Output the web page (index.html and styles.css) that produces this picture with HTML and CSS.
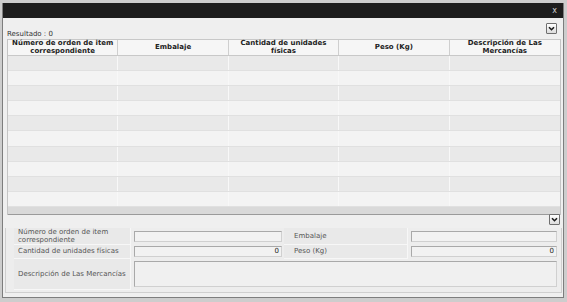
FILE: index.html
```html
<!DOCTYPE html>
<html lang="es">
<head>
<meta charset="utf-8">
<title>Mercancías</title>
<link rel="stylesheet" href="styles.css">
</head>
<body>
<div class="page">
  <div class="dialog">
    <div class="titlebar"><span class="close">x</span></div>
    <div class="content">
      <div class="toolbar">
        <span class="result">Resultado : 0</span>
        <button class="dd" type="button"><svg width="9" height="9" viewBox="0 0 9 9"><path d="M2 3.2 L4.5 5.7 L7 3.2" fill="none" stroke="#1a1a1a" stroke-width="1.6"/></svg></button>
      </div>
      <div class="grid">
        <div class="ghead">
          <div class="hc">Número de orden de item correspondiente</div>
          <div class="hc">Embalaje</div>
          <div class="hc">Cantidad de unidades físicas</div>
          <div class="hc">Peso (Kg)</div>
          <div class="hc">Descripción de Las Mercancías</div>
        </div>
        <div class="grows">
          <div class="gr odd"><div></div><div></div><div></div><div></div><div></div></div>
          <div class="gr"><div></div><div></div><div></div><div></div><div></div></div>
          <div class="gr odd"><div></div><div></div><div></div><div></div><div></div></div>
          <div class="gr"><div></div><div></div><div></div><div></div><div></div></div>
          <div class="gr odd"><div></div><div></div><div></div><div></div><div></div></div>
          <div class="gr"><div></div><div></div><div></div><div></div><div></div></div>
          <div class="gr odd"><div></div><div></div><div></div><div></div><div></div></div>
          <div class="gr"><div></div><div></div><div></div><div></div><div></div></div>
          <div class="gr odd"><div></div><div></div><div></div><div></div><div></div></div>
          <div class="gr"><div></div><div></div><div></div><div></div><div></div></div>
        </div>
        <div class="gfoot"></div>
      </div>
      <div class="splitter">
        <div class="sline"></div>
        <button class="dd" type="button"><svg width="9" height="9" viewBox="0 0 9 9"><path d="M2 3.2 L4.5 5.7 L7 3.2" fill="none" stroke="#1a1a1a" stroke-width="1.6"/></svg></button>
      </div>
      <div class="panel">
        <div class="form">
          <div class="lbl">Número de orden de item correspondiente</div>
          <div class="fld"><div class="inp"></div></div>
          <div class="lbl">Embalaje</div>
          <div class="fld"><div class="inp"></div></div>
          <div class="lbl">Cantidad de unidades físicas</div>
          <div class="fld"><div class="inp num">0</div></div>
          <div class="lbl">Peso (Kg)</div>
          <div class="fld"><div class="inp num">0</div></div>
          <div class="lbl tall">Descripción de Las Mercancías</div>
          <div class="fld wide"><div class="txt"></div></div>
        </div>
      </div>
    </div>
  </div>
</div>
</body>
</html>
```
FILE: styles.css
```css
* { box-sizing: border-box; }
html, body { margin: 0; padding: 0; }
body {
  width: 567px;
  height: 302px;
  overflow: hidden;
  background: #cdcdcd;
  font-family: "DejaVu Sans", Verdana, sans-serif;
  font-size: 7px;
  color: #333;
}
.page {
  padding: 3px 0 0 2px;
}
.dialog {
  width: 562px;
  height: 295px;
  border: 1px solid #7d7d7d;
  border-top: none;
  background: #efefef;
  display: flex;
  flex-direction: column;
}
.titlebar {
  height: 15px;
  background: #1d1d1d;
  display: flex;
  justify-content: flex-end;
  align-items: center;
  padding-right: 6px;
}
.close {
  color: #d0d0d0;
  font-size: 8px;
  line-height: 8px;
}
.content {
  flex: 1;
  padding: 0 2px 0 4px;
  display: flex;
  flex-direction: column;
}
.toolbar {
  height: 21px;
  display: flex;
  justify-content: space-between;
  align-items: flex-start;
}
.result {
  margin-top: 12px;
  font-size: 7px;
  color: #333;
}
.dd {
  width: 11px;
  height: 11px;
  padding: 0;
  margin: 0;
  border: 1px solid #6f6f6f;
  border-radius: 1px;
  background: linear-gradient(#ffffff, #dcdcdc);
  display: flex;
  align-items: center;
  justify-content: center;
}
.toolbar .dd { margin-top: 5px; margin-right: 4px; }
.grid {
  border-left: 1px solid #c4c4c4;
  border-right: 1px solid #c4c4c4;
  background: #ececec;
}
.ghead {
  display: grid;
  grid-template-columns: repeat(5, 1fr);
  height: 17px;
  border-top: 1px solid #c8c8c8;
  border-bottom: 1px solid #c8c8c8;
  background: #f6f6f6;
}
.hc {
  font-weight: bold;
  font-size: 7px;
  line-height: 7.5px;
  color: #222;
  text-align: center;
  display: flex;
  align-items: center;
  justify-content: center;
  padding: 0 3px;
  border-right: 1px solid #cfcfcf;
}
.hc:last-child { border-right: none; }
.grows { display: flex; flex-direction: column; }
.gr {
  display: grid;
  grid-template-columns: repeat(5, 1fr);
  height: 15.1px;
  background: #f3f3f3;
  border-bottom: 1px solid #e0e0e0;
}
.gr.odd { background: #e9e9e9; }
.gr > div { border-right: 1px solid #f8f8f8; }
.gr > div:last-child { border-right: none; }
.gfoot {
  height: 8px;
  background: #d9d9d9;
  border-bottom: 1px solid #9a9a9a;
}
.splitter {
  height: 13px;
  display: flex;
  align-items: flex-start;
}
.sline {
  flex: 1;
  height: 1px;
  background: transparent;
}
.splitter .dd { margin-top: -1px; margin-right: 1px; }
.panel {
  flex: 1;
  margin: 0 -1px 4px -2px;
  border: 1px solid #cfcfcf;
  border-top: none;
  padding: 0 2px 0 8px;
  background: #ededed;
}
.form {
  display: grid;
  grid-template-columns: 117px 153px 124px 151px;
  grid-template-rows: 17px 14px 31px;
}
.lbl {
  background: #e9e9e9;
  border-right: 1px solid #f7f7f7;
  border-bottom: 1px solid #f7f7f7;
  display: flex;
  align-items: center;
  padding: 0 4px;
  color: #555;
  font-size: 7px;
  line-height: 8px;
}
.lbl:nth-child(3), .lbl:nth-child(7) { padding-left: 10px; }
.fld {
  display: flex;
  align-items: center;
  padding: 0 2px 0 3px;
}
.fld.wide { grid-column: 2 / 5; }
.inp {
  width: 100%;
  height: 11px;
  border: 1px solid #a9a9a9;
  border-right-color: #d0d0d0;
  border-bottom-color: #d0d0d0;
  background: #f2f2f2;
  font-size: 7px;
  line-height: 9px;
  color: #222;
  padding: 0 2px;
}
.inp.num { text-align: right; }
.txt {
  width: 100%;
  height: 26px;
  border: 1px solid #a9a9a9;
  border-right-color: #d0d0d0;
  border-bottom-color: #d0d0d0;
  background: #f0f0f0;
}
```
